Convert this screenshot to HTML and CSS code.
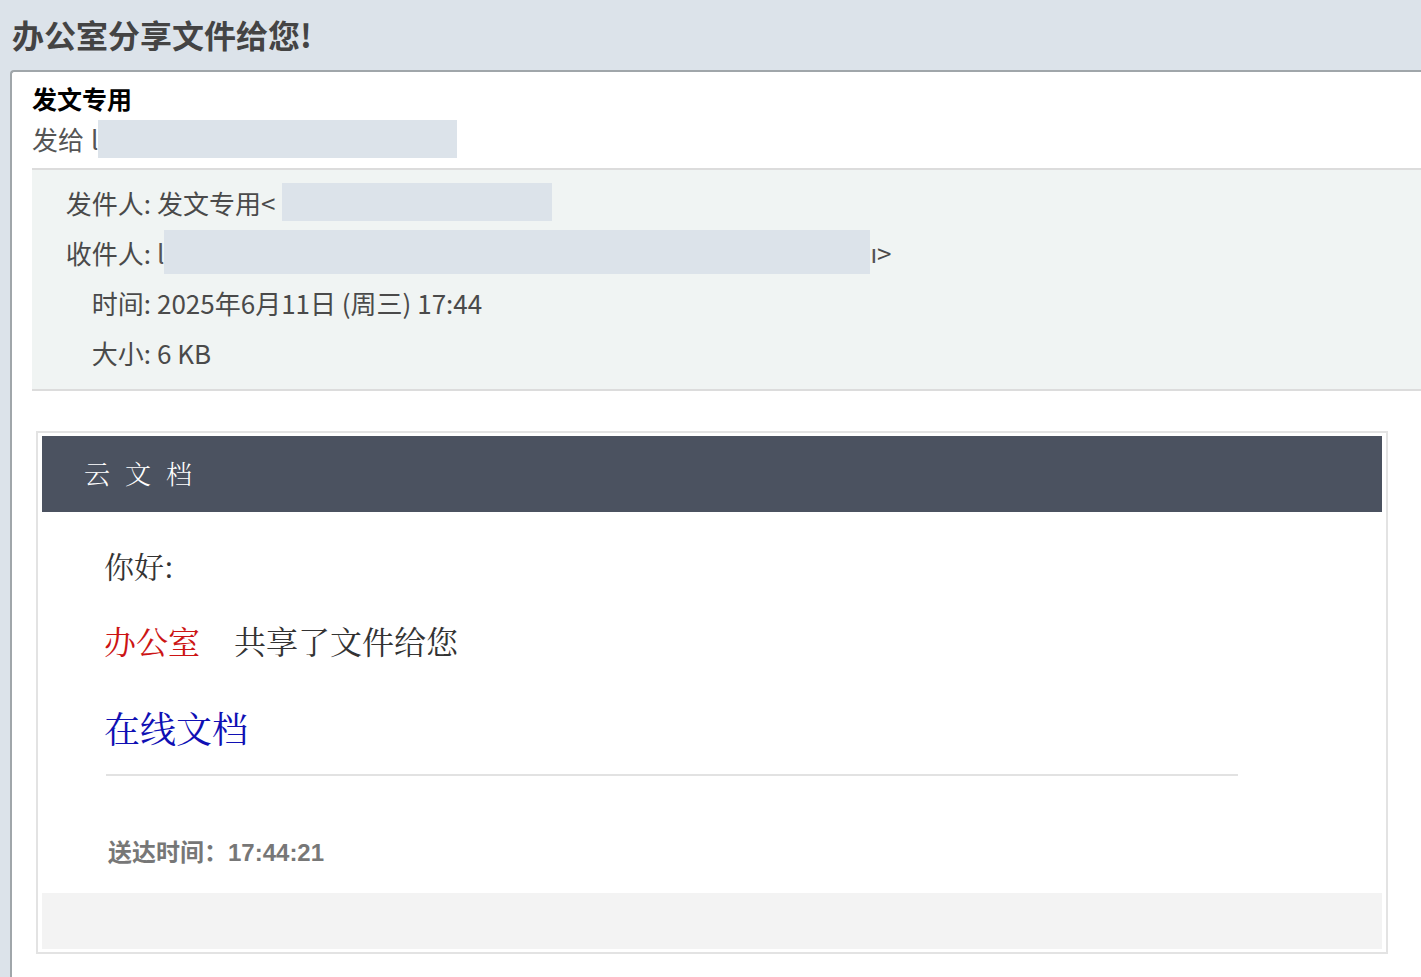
FILE: index.html
```html
<!DOCTYPE html>
<html lang="zh-CN">
<head>
  <meta charset="UTF-8">
  <meta name="viewport" content="width=device-width, initial-scale=1.0">
  <title>办公室分享文件给您!</title>
  <link rel="stylesheet" href="styles.css">
</head>
<body>
  <h1 class="subject">办公室分享文件给您!</h1>

  <div class="mail">
    <div class="mail-from">
      <div class="from-name">发文专用</div>
      <div class="from-to">发给<span class="hide-mark gap">l</span><span class="mask mask-to"></span></div>
    </div>

    <!-- header info -->
    <div class="meta">
      <span class="label">发件人:</span>
      <span class="value">发文专用&lt;<span class="mask mask-sender"></span></span>
      <span class="label">收件人:</span>
      <span class="value"><span class="hide-mark">l</span><span class="mask mask-rcpt"></span><span class="hide-mark">ı</span>&gt;</span>
      <span class="label">时间:</span>
      <span class="value">2025年6月11日 (周三) 17:44</span>
      <span class="label">大小:</span>
      <span class="value">6 KB</span>
    </div>

    <!-- mail body -->
    <div class="card">
      <div class="card-head">云文档</div>
      <div class="card-body">
        <p class="hello">你好:</p>
        <p class="share"><span class="owner">办公室</span><span class="share-text">共享了文件给您</span></p>
        <p class="doc-link"><a href="#">在线文档</a></p>
        <hr>
        <p class="sent-at">送达时间：17:44:21</p>
      </div>
      <div class="card-foot"></div>
    </div>
  </div>
</body>
</html>
```

FILE: styles.css
```css
body {
  font-family: "Noto Sans CJK SC", "Noto Sans", sans-serif;
  background: #dce3ea;
  color: #555;
  margin: 0;
  padding: 0;
  min-height: 100vh;
  display: flex;
  flex-direction: column;
}

.subject {
  margin: 0;
  height: 70px;
  line-height: 68px;
  padding-left: 12px;
  font-size: 32px;
  font-weight: bold;
  color: #444;
}

.mail {
  flex: 1;
  margin-left: 10px;
  background: #fff;
  border-top: 2px solid #a0a6aa;
  border-left: 2px solid #a0a6aa;
  border-top-left-radius: 4px;
  padding-left: 20px;
  padding-bottom: 30px;
}

.mail-from {
  padding-top: 6px;
  padding-bottom: 8px;
}

.from-name {
  font-size: 25px;
  font-weight: bold;
  color: #000;
  line-height: 40px;
}

.from-to {
  font-size: 26px;
  line-height: 42px;
  display: flex;
  align-items: center;
}

.hide-mark {
  color: #555;
}

.gap {
  margin-left: 7px;
}

.mask {
  display: inline-block;
  background: #dce3ea;
  vertical-align: middle;
}

.mask-to {
  width: 359px;
  height: 38px;
}

.mask-sender {
  width: 270px;
  height: 38px;
  margin-left: 7px;
}

.mask-rcpt {
  width: 706px;
  height: 44px;
}

.meta {
  display: grid;
  grid-template-columns: 119px 1fr;
  grid-auto-rows: 50px;
  column-gap: 6px;
  align-items: center;
  padding: 7px 0 12px 0;
  background: #f0f4f3;
  border-top: 2px solid #dcdcdc;
  border-bottom: 2px solid #dcdcdc;
  font-size: 26px;
  color: #4a4a4a;
}

.meta .label {
  text-align: right;
}

.meta .value {
  display: flex;
  align-items: center;
  white-space: nowrap;
}

.card {
  margin: 40px 0 0 4px;
  width: 1340px;
  border: 2px solid #e3e3e3;
  padding: 3px 4px;
}

.card-head {
  height: 76px;
  line-height: 74px;
  background: #4b5260;
  color: #fff;
  padding-left: 42px;
  font-size: 26px;
  letter-spacing: 15px;
  font-family: "Noto Serif CJK SC", "Noto Sans CJK SC", serif;
  font-weight: 300;
}

.card-body {
  padding: 33px 0 25px 62px;
  font-family: "Noto Serif CJK SC", "Liberation Serif", "Noto Sans CJK SC", serif;
  color: #333;
}

.card-body p {
  margin: 0;
}

.hello {
  font-size: 30px;
  line-height: 40px;
}

.share {
  margin-top: 35px !important;
  font-size: 32px;
  line-height: 40px;
}

.owner {
  color: #cc1414;
  margin-right: 34px;
}

.doc-link {
  margin-top: 46px !important;
  font-size: 36px;
  line-height: 44px;
}

.doc-link a {
  color: #1010b4;
  text-decoration: none;
}

.card-body hr {
  margin: 24px 0 0 2px;
  width: 1132px;
  border: none;
  border-top: 2px solid #e2e2e2;
}

.sent-at {
  margin: 62px 0 0 4px !important;
  font-family: "Liberation Sans", "Noto Sans CJK SC", sans-serif;
  font-size: 24px;
  font-weight: bold;
  line-height: 30px;
  color: #777;
}

.card-foot {
  height: 56px;
  background: #f3f3f3;
}
```
